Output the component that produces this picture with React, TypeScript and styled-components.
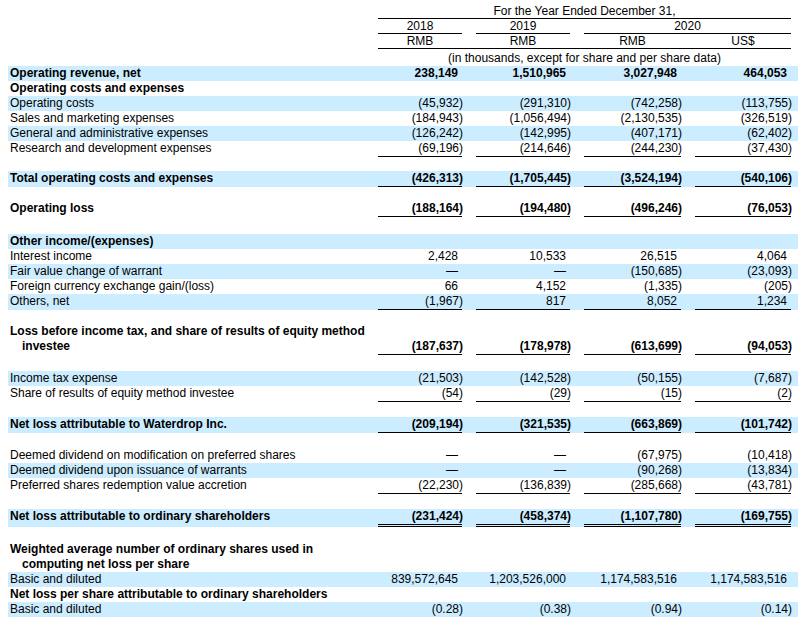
import React from "react";
import styled, { createGlobalStyle } from "styled-components";

type Rule = "none" | "single" | "double";

type LineRow = {
	label: string;
	values?: string[];
	bold?: boolean;
	shaded?: boolean;
	indent?: boolean;
	rule?: Rule;
};

type SpaceRow = { space: number };

type Item = LineRow | SpaceRow;

const rows: Item[] = [
	{ label: "Operating revenue, net", values: ["238,149", "1,510,965", "3,027,948", "464,053"], bold: true, shaded: true },
	{ label: "Operating costs and expenses", bold: true },
	{ label: "Operating costs", values: ["(45,932)", "(291,310)", "(742,258)", "(113,755)"], shaded: true },
	{ label: "Sales and marketing expenses", values: ["(184,943)", "(1,056,494)", "(2,130,535)", "(326,519)"] },
	{ label: "General and administrative expenses", values: ["(126,242)", "(142,995)", "(407,171)", "(62,402)"], shaded: true },
	{ label: "Research and development expenses", values: ["(69,196)", "(214,646)", "(244,230)", "(37,430)"], rule: "single" },
	{ space: 14 },
	{ label: "Total operating costs and expenses", values: ["(426,313)", "(1,705,445)", "(3,524,194)", "(540,106)"], bold: true, shaded: true, rule: "single" },
	{ space: 14 },
	{ label: "Operating loss", values: ["(188,164)", "(194,480)", "(496,246)", "(76,053)"], bold: true, rule: "single" },
	{ space: 17 },
	{ label: "Other income/(expenses)", bold: true, shaded: true },
	{ label: "Interest income", values: ["2,428", "10,533", "26,515", "4,064"] },
	{ label: "Fair value change of warrant", values: ["—", "—", "(150,685)", "(23,093)"], shaded: true },
	{ label: "Foreign currency exchange gain/(loss)", values: ["66", "4,152", "(1,335)", "(205)"] },
	{ label: "Others, net", values: ["(1,967)", "817", "8,052", "1,234"], shaded: true, rule: "single" },
	{ space: 14 },
	{ label: "Loss before income tax, and share of results of equity method", bold: true },
	{ label: "investee", values: ["(187,637)", "(178,978)", "(613,699)", "(94,053)"], bold: true, indent: true, rule: "single" },
	{ space: 16 },
	{ label: "Income tax expense", values: ["(21,503)", "(142,528)", "(50,155)", "(7,687)"], shaded: true },
	{ label: "Share of results of equity method investee", values: ["(54)", "(29)", "(15)", "(2)"], rule: "single" },
	{ space: 15 },
	{ label: "Net loss attributable to Waterdrop Inc.", values: ["(209,194)", "(321,535)", "(663,869)", "(101,742)"], bold: true, shaded: true, rule: "single" },
	{ space: 15 },
	{ label: "Deemed dividend on modification on preferred shares", values: ["—", "—", "(67,975)", "(10,418)"] },
	{ label: "Deemed dividend upon issuance of warrants", values: ["—", "—", "(90,268)", "(13,834)"], shaded: true },
	{ label: "Preferred shares redemption value accretion", values: ["(22,230)", "(136,839)", "(285,668)", "(43,781)"], rule: "single" },
	{ space: 15 },
	{ label: "Net loss attributable to ordinary shareholders", values: ["(231,424)", "(458,374)", "(1,107,780)", "(169,755)"], bold: true, shaded: true, rule: "double" },
	{ space: 15 },
	{ label: "Weighted average number of ordinary shares used in", bold: true },
	{ label: "computing net loss per share", bold: true, indent: true },
	{ label: "Basic and diluted", values: ["839,572,645", "1,203,526,000", "1,174,583,516", "1,174,583,516"], shaded: true },
	{ label: "Net loss per share attributable to ordinary shareholders", bold: true },
	{ label: "Basic and diluted", values: ["(0.28)", "(0.38)", "(0.94)", "(0.14)"], shaded: true },
];

const GlobalStyle = createGlobalStyle`
	body {
		margin: 0;
		background: #ffffff;
	}
`;

const Page = styled.div`
	padding: 4px 0 0 8px;
	width: 790px;
	font-family: "Liberation Sans", Arial, sans-serif;
	font-size: 12px;
	color: #000000;
`;

// label column + four figure columns
const Row = styled.div<{ $shaded?: boolean; $bold?: boolean }>`
	display: grid;
	grid-template-columns: 356px 84px 94px 97px 96px;
	column-gap: 14px;
	padding-right: 7px;
	background: ${(p) => (p.$shaded ? "#ccecff" : "transparent")};
	font-weight: ${(p) => (p.$bold ? 700 : 400)};
`;

const Spacer = styled.div<{ $h: number }>`
	height: ${(p) => p.$h}px;
`;

const Label = styled.div<{ $indent?: boolean }>`
	padding-left: ${(p) => (p.$indent ? 14 : 2)}px;
	height: 15px;
	line-height: 15px;
	white-space: nowrap;
`;

const Cell = styled.div<{ $rule: Rule }>`
	height: 15px;
	line-height: 15px;
	text-align: right;
	white-space: nowrap;
	${(p) =>
		p.$rule === "single"
			? "border-bottom: 1px solid #000;"
			: p.$rule === "double"
			? "border-bottom: 3px double #000;"
			: ""}
`;

const Num = styled.span<{ $neg: boolean }>`
	padding-right: ${(p) => (p.$neg ? 0 : 4)}px;
	margin-right: ${(p) => (p.$neg ? -1 : 0)}px;
`;

const Head = styled.div<{ $span?: string; $rule?: boolean; $h?: number }>`
	grid-column: ${(p) => p.$span || "auto"};
	height: ${(p) => p.$h || 14}px;
	line-height: 14px;
	text-align: center;
	white-space: nowrap;
	${(p) => (p.$rule ? "border-bottom: 1px solid #000;" : "")}
`;

const Units = styled.div`
	grid-column: 2 / 6;
	display: grid;
	grid-template-columns: 84px 94px 97px 96px;
	column-gap: 14px;
	border-bottom: 1px solid #000;
	height: 14px;
	line-height: 14px;
	text-align: center;
`;

const Note = styled.div`
	grid-column: 2 / 6;
	height: 17px;
	padding-top: 2px;
	box-sizing: border-box;
	line-height: 15px;
	text-align: center;
	white-space: nowrap;
`;

const Blank = styled.div``;

const App = () => {
	return (
		<>
			<GlobalStyle />
			<Page>
				<Row>
					<Blank />
					<Head $span="2 / 6" $rule $h={14}>
						For the Year Ended December 31,
					</Head>
				</Row>
				<Row>
					<Blank />
					<Head $rule>2018</Head>
					<Head $rule>2019</Head>
					<Head $span="4 / 6" $rule>
						2020
					</Head>
				</Row>
				<Row>
					<Blank />
					<Units>
						<span>RMB</span>
						<span>RMB</span>
						<span>RMB</span>
						<span>US$</span>
					</Units>
				</Row>
				<Row>
					<Blank />
					<Note>(in thousands, except for share and per share data)</Note>
				</Row>
				{rows.map((r, i) => {
					if ("space" in r) return <Spacer key={i} $h={r.space} />;
					return (
						<Row key={i} $shaded={r.shaded} $bold={r.bold}>
							<Label $indent={r.indent}>{r.label}</Label>
							{r.values?.map((v, j) => (
								<Cell key={j} $rule={r.rule || "none"}>
									<Num $neg={v.endsWith(")")}>{v}</Num>
								</Cell>
							))}
						</Row>
					);
				})}
			</Page>
		</>
	);
};

export default App;
